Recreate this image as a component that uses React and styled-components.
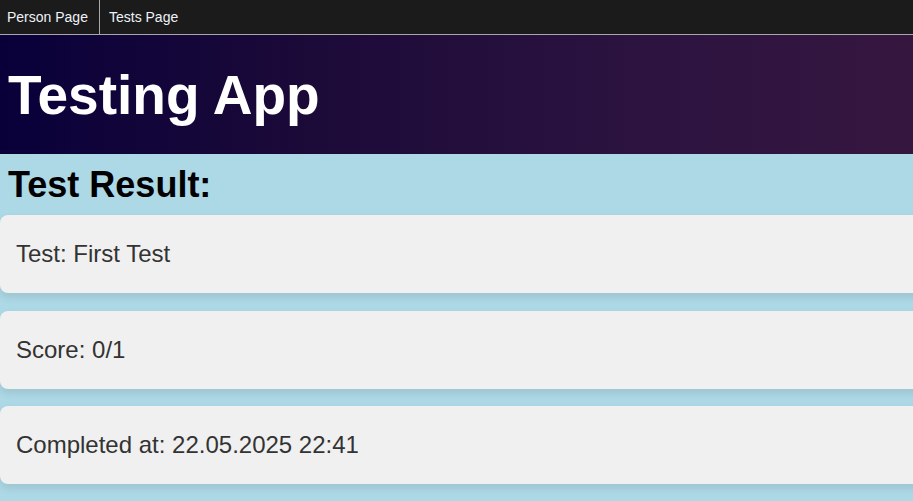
import React from "react";
import styled, { createGlobalStyle } from "styled-components";

const GlobalStyle = createGlobalStyle`
    html, body {
        margin: 0;
        padding: 0;
        overflow-x: hidden;
        background: #add8e6;
        font-family: "Liberation Sans", Arial, sans-serif;
    }
`;

const Nav = styled.nav`
    display: flex;
    align-items: stretch;
    height: 34px;
    background: #1b1b1b;
    border-bottom: 1px solid #a8a8a8;
`;

const NavLink = styled.a`
    display: flex;
    align-items: center;
    padding: 0 11px 0 7px;
    font-size: 14px;
    color: #eef2f8;
    text-decoration: none;
    border-right: ${({ $divider }) => ($divider ? "1px solid #a8a8a8" : "none")};

    & + & {
        padding-left: 9px;
    }
`;

const Header = styled.header`
    display: flex;
    align-items: center;
    height: 119px;
    padding: 0 8px;
    background: linear-gradient(90deg, #09003a 0%, #1c0a38 35%, #2c1340 70%, #35163f 100%);
`;

const Title = styled.h1`
    margin: 0;
    font-size: 55px;
    font-weight: 700;
    color: #ffffff;
`;

const Main = styled.main`
    display: flex;
    flex-direction: column;
    gap: 17.5px;
    padding-bottom: 20px;
`;

const Heading = styled.h2`
    margin: 10px 0 -8.5px;
    padding: 0 8px;
    font-size: 36px;
    font-weight: 700;
    color: #000;
`;

const Card = styled.div`
    width: 100%;
    padding: 25px 16px;
    background: #f0f0f0;
    border-radius: 8px;
    box-shadow: 0 4px 8px rgba(0, 0, 0, 0.1);
    font-size: 24px;
    color: #333;
`;

const result = [
    "Test: First Test",
    "Score: 0/1",
    "Completed at: 22.05.2025 22:41",
];

const App = () => {
    return (
        <>
            <GlobalStyle />
            <Nav>
                <NavLink href="#" $divider>Person Page</NavLink>
                <NavLink href="#">Tests Page</NavLink>
            </Nav>
            <Header>
                <Title>Testing App</Title>
            </Header>
            <Main>
                <Heading>Test Result:</Heading>
                {result.map((line) => (
                    <Card key={line}>{line}</Card>
                ))}
            </Main>
        </>
    );
};

export default App;
